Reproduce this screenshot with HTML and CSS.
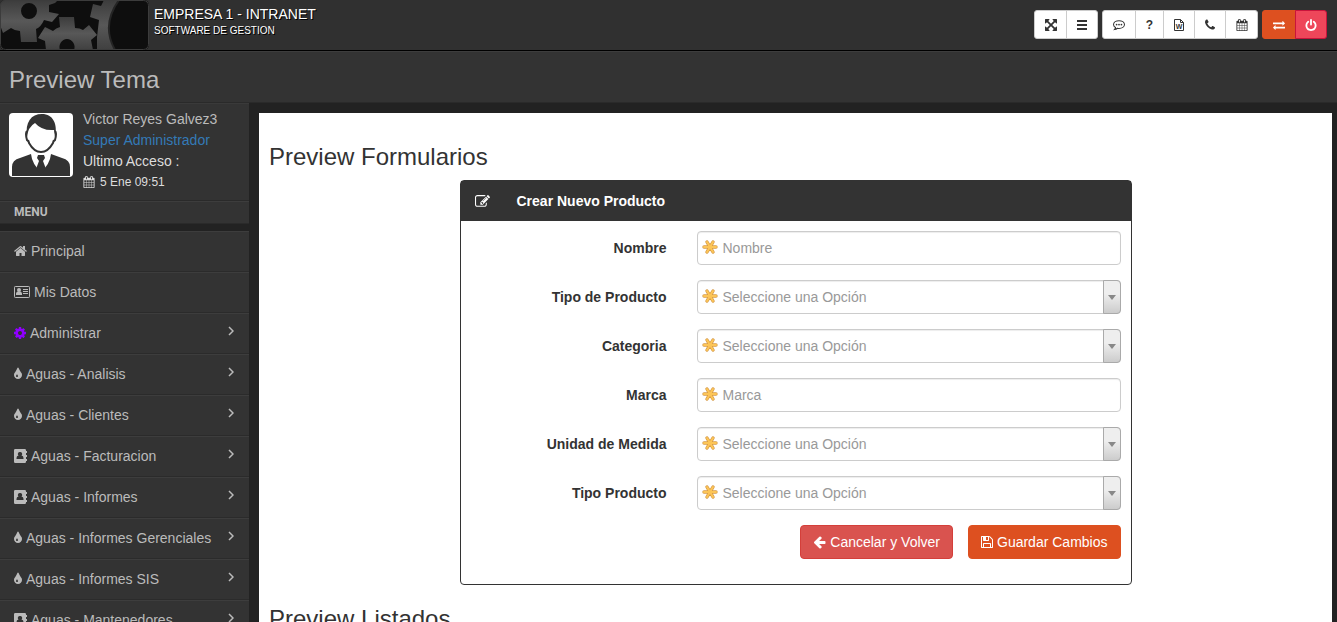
FILE: index.html
```html
<!DOCTYPE html>
<html lang="es">
<head>
<meta charset="utf-8">
<title>Empresa 1 - Intranet</title>
<link rel="stylesheet" href="styles.css">
</head>
<body>
<svg class="sprite" aria-hidden="true">
  <symbol id="expand" viewBox="128 128 1536 1536"><path d="M1411 541l-355 355 355 355 144-144q29-31 70-14 39 17 39 59v448q0 26-19 45t-45 19h-448q-42 0-59-40-17-39 14-69l144-144-355-355-355 355 144 144q31 30 14 69-17 40-59 40h-448q-26 0-45-19t-19-45v-448q0-42 40-59 39-17 69 14l144 144 355-355-355-355-144 144q-19 19-45 19-12 0-24-5-40-17-40-59v-448q0-26 19-45t45-19h448q42 0 59 40 17 39-14 69l-144 144 355 355 355-355-144-144q-31-30-14-69 17-40 59-40h448q26 0 45 19t19 45v448q0 42-39 59-13 5-25 5-26 0-45-19z"/></symbol>
  <symbol id="bars" viewBox="0 0 12 12"><path d="M1 1h10v2H1zM1 5h10v2H1zM1 9h10v2H1z"/></symbol>
  <symbol id="comment" viewBox="0 0 14 14"><path d="M7 2C3.700 2 .6 3.800.6 6.500c0 1.500.9 2.700 2.300 3.500-.1.900-.6 1.700-1.200 2.300 1.600-.2 2.700-.8 3.500-1.500.6.100 1.200.2 1.800.2 3.300 0 6.400-1.800 6.400-4.500S10.300 2 7 2z" fill="none" stroke="currentColor" stroke-width="1.200"/><circle cx="4.200" cy="6.500" r="1"/><circle cx="7" cy="6.500" r="1"/><circle cx="9.800" cy="6.500" r="1"/></symbol>
  <symbol id="phone" viewBox="192 192 1408 1408"><path d="M1600 1240q0 27-10 70.500t-21 68.500q-21 50-122 106-94 51-186 51-27 0-53-3.500t-57.500-12.500-47-14.500-55.500-20.500-49-18q-98-35-175-83-127-79-264-216t-216-264q-48-77-83-175-3-9-18-49t-20.500-55.500-14.500-47-12.500-57.500-3.500-53q0-92 51-186 56-101 106-122 25-11 68.500-21t70.500-10q14 0 21 3 18 6 53 76 11 19 30 54t35 63.500 31 53.500q3 4 17.500 25t21.500 35.500 7 28.500q0 20-28.500 50t-62 55-62 53-28.500 46q0 9 5 22.500t8.500 20.500 14 24 11.500 19q76 137 174 235t235 174q2 1 19 11.500t24 14 20.500 8.500 22.500 5q18 0 46-28.500t53-62 55-62 50-28.500q14 0 28.500 7t35.500 21.500 25 17.500q25 15 53.500 31t63.500 35 54 30q70 35 76 53 3 7 3 21z"/></symbol>
  <symbol id="calendar" viewBox="64 0 1664 1792"><path d="M192 1664h288v-288h-288v288zm352 0h320v-288h-320v288zm-352-352h288v-320h-288v320zm352 0h320v-320h-320v320zm-352-384h288v-288h-288v288zm736 736h320v-288h-320v288zm-384-736h320v-288h-320v288zm768 736h288v-288h-288v288zm-384-352h320v-320h-320v320zm-352-864v-288q0-13-9.500-22.500t-22.500-9.500h-64q-13 0-22.500 9.500t-9.500 22.500v288q0 13 9.500 22.500t22.500 9.500h64q13 0 22.500-9.500t9.500-22.500zm736 864h288v-320h-288v320zm-384-384h320v-288h-320v288zm384 0h288v-288h-288v288zm32-480v-288q0-13-9.500-22.500t-22.500-9.500h-64q-13 0-22.500 9.500t-9.500 22.500v288q0 13 9.500 22.500t22.500 9.500h64q13 0 22.500-9.500t9.500-22.500zm384-64v1280q0 52-38 90t-90 38h-1408q-52 0-90-38t-38-90v-1280q0-52 38-90t90-38h128v-96q0-66 47-113t113-47h64q66 0 113 47t47 113v96h384v-96q0-66 47-113t113-47h64q66 0 113 47t47 113v96h128q52 0 90 38t38 90z"/></symbol>
  <symbol id="exchange" viewBox="0 0 1792 1792"><path d="M1792 1184v192q0 13-9.500 22.500t-22.500 9.500h-1376v192q0 13-9.500 22.500t-22.500 9.500q-12 0-24-10l-319-320q-9-9-9-22 0-14 9-23l320-320q9-9 23-9 13 0 22.500 9.500t9.500 22.500v192h1376q13 0 22.500 9.500t9.500 22.500zm0-544q0 14-9 23l-320 320q-9 9-23 9-13 0-22.500-9.500t-9.500-22.500v-192h-1376q-13 0-22.500-9.500t-9.500-22.500v-192q0-13 9.500-22.500t22.500-9.500h1376v-192q0-14 9-23t23-9q12 0 24 10l319 319q9 9 9 23z"/></symbol>
  <symbol id="power" viewBox="128 0 1536 1664"><path d="M1664 896q0 156-61 298t-164 245-245 164-298 61-298-61-245-164-164-245-61-298q0-182 80.500-343t226.500-270q43-32 95.500-25t83.500 50q32 42 24.500 94.500t-49.500 84.500q-98 74-151.500 181t-53.500 228q0 104 40.500 198.500t109.500 163.500 163.500 109.500 198.500 40.500 198.500-40.500 163.500-109.500 109.500-163.500 40.500-198.500q0-121-53.500-228t-151.500-181q-42-32-49.500-84.500t24.500-94.500q31-43 84-50t95 25q146 109 226.500 270t80.500 343zm-640-768v640q0 52-38 90t-90 38-90-38-38-90v-640q0-52 38-90t90-38 90 38 38 90z"/></symbol>
  <symbol id="home" viewBox="64 0 1664 1792"><path d="M1472 992v480q0 26-19 45t-45 19h-384v-384h-256v384h-384q-26 0-45-19t-19-45v-480q0-1 .5-3t.5-3l575-474 575 474q1 2 1 6zm223-69l-62 74q-8 9-21 11h-3q-13 0-21-7l-692-577-692 577q-12 8-24 7-13-2-21-11l-62-74q-8-10-7-23.500t11-21.500l719-599q32-26 76-26t76 26l244 204v-195q0-14 9-23t23-9h192q14 0 23 9t9 23v408l219 182q10 8 11 21.500t-7 23.500z"/></symbol>
  <symbol id="card" viewBox="0 0 16 14"><path d="M1.300 1.500h13.400a.8.8 0 0 1 .8.8v9.400a.8.8 0 0 1-.8.8H1.300a.8.8 0 0 1-.8-.8V2.300a.8.8 0 0 1 .8-.8z" fill="none" stroke="currentColor"/><circle cx="5" cy="5" r="2"/><path d="M2 10V8.600Q2.200 7 3.700 6.600h2.600Q7.800 7 8 8.600V10zM9 4h5v1H9zM9 6h5v1H9zM9 8h5v1H9zM3 12h2v1H3zM11 12h2v1h-2z"/></symbol>
  <symbol id="cog" viewBox="128 0 1536 1792"><path d="M1152 896q0-106-75-181t-181-75-181 75-75 181 75 181 181 75 181-75 75-181zm512-109v222q0 12-8 23t-20 13l-185 28q-19 54-39 91 35 50 107 138 10 12 10 25t-9 23q-27 37-99 108t-94 71q-12 0-26-9l-138-108q-44 23-91 38-16 136-29 186-7 28-36 28h-222q-14 0-24.500-8.500t-11.500-21.500l-28-184q-49-16-90-37l-141 107q-10 9-25 9-14 0-25-11-126-114-165-168-7-10-7-23 0-12 8-23 15-21 51-66.500t54-70.500q-27-50-41-99l-183-27q-13-2-21-12.500t-8-23.500v-222q0-12 8-23t19-13l186-28q14-46 39-92-40-57-107-138-10-12-10-24 0-10 9-23 26-36 98.500-107.500t94.500-71.500q13 0 26 10l138 107q44-23 91-38 16-136 29-186 7-28 36-28h222q14 0 24.500 8.500t11.500 21.500l28 184q49 16 90 37l142-107q9-9 24-9 13 0 25 10 129 119 165 170 7 8 7 22 0 12-8 23-15 21-51 66.500t-54 70.500q26 50 41 98l183 28q13 2 21 12.500t8 23.500z"/></symbol>
  <symbol id="tint" viewBox="384 0 1024 1792"><path d="M896 1152q0-36-20-69-1-1-15.500-22.500t-25.500-38-25-44-21-50.500q-4-16-21-16t-21 16q-7 23-21 50.500t-25 44-25.500 38-15.500 22.500q-20 33-20 69 0 53 37.500 90.500t90.500 37.500 90.500-37.500 37.500-90.500zm512-128q0 212-150 362t-362 150-362-150-150-362q0-145 81-275 6-9 62.500-90.500t101-151 99.500-178 83-201.500q9-30 34-47t51-17 51.500 17 33.500 47q28 93 83 201.500t99.500 178 101 151 62.500 90.500q81 127 81 275z"/></symbol>
  <symbol id="book" viewBox="0 0 13 14"><path fill-rule="evenodd" d="M1.200 0h9.600q1.200 0 1.200 1.200V2h1v2h-1v2h1v2h-1v2h1v2h-1v.8q0 1.200-1.200 1.200H1.200Q0 14 0 12.800V1.200Q0 0 1.200 0zM6 3a2 2 0 0 0-1.500 3.500Q2.500 6.800 2.500 9v1h7V9q0-2.200-2-2.500A2 2 0 0 0 6 3z"/></symbol>
  <symbol id="angle" viewBox="0 0 6 10"><path d="M1 1l4 4-4 4" fill="none" stroke="currentColor" stroke-width="1.500"/></symbol>
  <symbol id="edit" viewBox="0 0 1792 1792"><path d="M888 1184l116-116-152-152-116 116v56h96v96h56zm440-720q-16-16-33 1l-350 350q-17 17-1 33t33-1l350-350q17-17 1-33zm80 594v190q0 119-84.500 203.500t-203.500 84.500h-832q-119 0-203.500-84.500t-84.500-203.500v-832q0-119 84.500-203.500t203.500-84.500h832q63 0 117 25 15 7 18 23 3 17-9 29l-49 49q-14 14-32 8-23-6-45-6h-832q-66 0-113 47t-47 113v832q0 66 47 113t113 47h832q66 0 113-47t47-113v-126q0-13 9-22l64-64q15-15 35-7t20 29zm-96-738l288 288-672 672h-288v-288zm444 132l-92 92-288-288 92-92q28-28 68-28t68 28l152 152q28 28 28 68t-28 68z"/></symbol>
  <symbol id="back" viewBox="64 0 1664 1792"><path d="M1664 896v128q0 53-32.500 90.500t-84.500 37.500h-704l293 294q38 36 38 90t-38 90l-75 76q-37 37-90 37-52 0-91-37l-651-652q-37-37-37-90 0-52 37-91l651-650q38-38 91-38 52 0 90 38l75 74q38 38 38 91t-38 91l-293 293h704q52 0 84.500 37.500t32.500 90.500z"/></symbol>
  <symbol id="save" viewBox="128 0 1536 1792"><path d="M512 1536h768v-384h-768v384zm896 0h128v-896q0-14-10-38.500t-20-34.500l-281-281q-10-10-34-20t-39-10v416q0 40-28 68t-68 28h-576q-40 0-68-28t-28-68v-416h-128v1280h128v-416q0-40 28-68t68-28h832q40 0 68 28t28 68v416zm-384-928v-320q0-13-9.500-22.500t-22.500-9.500h-192q-13 0-22.500 9.500t-9.500 22.500v320q0 13 9.500 22.500t22.500 9.500h192q13 0 22.500-9.500t9.500-22.500zm640 32v928q0 40-28 68t-68 28h-1344q-40 0-68-28t-28-68v-1344q0-40 28-68t68-28h928q40 0 88 20t76 48l280 280q28 28 48 76t20 88z"/></symbol>
  <symbol id="required" viewBox="0 0 16 16"><g fill="none" stroke-linecap="round"><path d="M2 8h12M5 3l6 10M11 3L5 13" stroke="#d69a48" stroke-width="3.400"/><path d="M2 8h12M5 3l6 10M11 3L5 13" stroke="#fcc557" stroke-width="2"/></g></symbol>
</svg>

<header class="topbar">
  <svg class="logo" viewBox="0 0 149 50" aria-hidden="true">
    <defs>
      <linearGradient id="metal" x1="0" y1="0" x2="0" y2="1"><stop offset="0" stop-color="#3c3c3c"/><stop offset=".5" stop-color="#585858"/><stop offset="1" stop-color="#404040"/></linearGradient>
      <clipPath id="frame"><rect width="149" height="50" rx="5"/></clipPath>
    </defs>
    <g clip-path="url(#frame)">
      <rect width="149" height="50" fill="#0e0e0e"/>
      <path fill="url(#metal)" fill-rule="evenodd" d="M0 0h58l-3 3-6 2v7l10 2-7 8-8-2q-3 7-8 9l1 13H21l-1-11q-5 0-9-3l-8 5-3-8zM29 3a8 8 0 1 0 0 16 8 8 0 0 0 0-16z"/>
      <path fill="url(#metal)" fill-rule="evenodd" d="M59 17h15l1 11q5 0 8 2l6-5 8 10-6 5 2 10H46l-1-9-7-3 7-11 8 4q3-3 7-4zM67 39a8 8 0 0 0-7 11h14a8 8 0 0 0-7-11z"/>
      <path fill="url(#metal)" d="M104 0h15q-18 25-4 50H97V37l2-17-9-3 3-13 8 2z"/>
      <path fill="none" stroke="#252525" stroke-width="2" d="M119 0q-18 25-4 50"/>
      <rect x=".5" y=".5" width="148" height="49" rx="5" fill="none" stroke="#3c3c3c"/>
    </g>
  </svg>
  <div class="brand">
    <div class="brand-name">EMPRESA 1 - INTRANET</div>
    <div class="brand-sub">SOFTWARE DE GESTION</div>
  </div>
  <nav class="tools" aria-label="Herramientas">
    <div class="tool-group">
      <button class="tool" aria-label="Pantalla completa"><svg class="i11"><use href="#expand"/></svg></button>
      <button class="tool" aria-label="Menu"><svg class="i10 wide"><use href="#bars"/></svg></button>
    </div>
    <div class="tool-group">
      <button class="tool" aria-label="Mensajes"><svg class="i12"><use href="#comment"/></svg></button>
      <button class="tool help" aria-label="Ayuda">?</button>
      <button class="tool" aria-label="Documento"><svg class="i10 wide" viewBox="0 0 12 12"><path d="M1.500 .5h6l3 3v8h-9zM7.500 .5v3h3" fill="none" stroke="currentColor"/><text x="6" y="10" text-anchor="middle" class="word-letter">W</text></svg></button>
      <button class="tool" aria-label="Telefono"><svg class="i10"><use href="#phone"/></svg></button>
      <button class="tool" aria-label="Calendario"><svg class="i11"><use href="#calendar"/></svg></button>
    </div>
    <div class="tool-group">
      <button class="tool orange" aria-label="Cambiar"><svg class="i12"><use href="#exchange"/></svg></button>
      <button class="tool red" aria-label="Salir"><svg class="i10 wide"><use href="#power"/></svg></button>
    </div>
  </nav>
</header>
<div class="titlebar"><h1>Preview Tema</h1></div>

<div class="layout">
  <aside class="sidebar">
    <div class="user">
      <svg class="avatar" viewBox="0 0 64 64" role="img" aria-label="Usuario">
        <rect width="64" height="64" rx="4" fill="#fff"/>
        <path fill="#333" d="M18 24C16 9 22 1 33 1s16 10 13 23l-1-7q-12 1-19-7-7 4-8 14z"/>
        <path fill="none" stroke="#333" stroke-width="2" d="M18 18q-2 2 0 9 2 1 2 3 5 9 12 9t12-9q0-2 2-3 2-7 0-9"/>
        <path fill="#333" d="M3 63V54q0-7 8-9l11-4q1 10 10 18 9-8 10-18l11 4q8 2 8 9v9z"/>
        <path fill="#333" d="M29 42h6l1 3-2 3 3 8-5 5-5-5 3-8-2-3z"/>
      </svg>
      <div class="user-info">
        <span class="muted">Victor Reyes Galvez3</span>
        <a class="role" href="#">Super Administrador</a>
        <span>Ultimo Acceso :</span>
        <span class="date"><svg class="i11"><use href="#calendar"/></svg>5 Ene 09:51</span>
      </div>
    </div>
    <div class="menu-title">MENU</div>
    <nav class="menu" aria-label="Principal">
      <a href="#"><svg class="m13"><use href="#home"/></svg>Principal</a>
      <a href="#"><svg class="m16"><use href="#card"/></svg>Mis Datos</a>
      <a href="#"><svg class="m12 purple"><use href="#cog"/></svg>Administrar<svg class="angle"><use href="#angle"/></svg></a>
      <a href="#"><svg class="m8"><use href="#tint"/></svg>Aguas - Analisis<svg class="angle"><use href="#angle"/></svg></a>
      <a href="#"><svg class="m8"><use href="#tint"/></svg>Aguas - Clientes<svg class="angle"><use href="#angle"/></svg></a>
      <a href="#"><svg class="m13"><use href="#book"/></svg>Aguas - Facturacion<svg class="angle"><use href="#angle"/></svg></a>
      <a href="#"><svg class="m13"><use href="#book"/></svg>Aguas - Informes<svg class="angle"><use href="#angle"/></svg></a>
      <a href="#"><svg class="m8"><use href="#tint"/></svg>Aguas - Informes Gerenciales<svg class="angle"><use href="#angle"/></svg></a>
      <a href="#"><svg class="m8"><use href="#tint"/></svg>Aguas - Informes SIS<svg class="angle"><use href="#angle"/></svg></a>
      <a href="#"><svg class="m13"><use href="#book"/></svg>Aguas - Mantenedores<svg class="angle"><use href="#angle"/></svg></a>
    </nav>
  </aside>

  <main class="content">
    <h2>Preview Formularios</h2>
    <form class="panel">
      <div class="panel-head"><svg class="edit"><use href="#edit"/></svg><h3>Crear Nuevo Producto</h3></div>
      <div class="panel-body">
        <div class="field"><label for="nombre">Nombre</label><div class="control"><svg class="req"><use href="#required"/></svg><input id="nombre" type="text" placeholder="Nombre"></div></div>
        <div class="field"><label for="tipo">Tipo de Producto</label><div class="control pick"><svg class="req"><use href="#required"/></svg><select id="tipo"><option>Seleccione una Opción</option></select></div></div>
        <div class="field"><label for="categoria">Categoria</label><div class="control pick"><svg class="req"><use href="#required"/></svg><select id="categoria"><option>Seleccione una Opción</option></select></div></div>
        <div class="field"><label for="marca">Marca</label><div class="control"><svg class="req"><use href="#required"/></svg><input id="marca" type="text" placeholder="Marca"></div></div>
        <div class="field"><label for="unidad">Unidad de Medida</label><div class="control pick"><svg class="req"><use href="#required"/></svg><select id="unidad"><option>Seleccione una Opción</option></select></div></div>
        <div class="field"><label for="tipo2">Tipo Producto</label><div class="control pick"><svg class="req"><use href="#required"/></svg><select id="tipo2"><option>Seleccione una Opción</option></select></div></div>
        <div class="actions">
          <button type="button" class="btn danger"><svg class="m13"><use href="#back"/></svg>Cancelar y Volver</button>
          <button type="button" class="btn primary"><svg class="m12"><use href="#save"/></svg>Guardar Cambios</button>
        </div>
      </div>
    </form>
    <h2>Preview Listados</h2>
  </main>
</div>
</body>
</html>
```

FILE: styles.css
```css
*, *::before, *::after { box-sizing: border-box; }
html { height: 100%; overflow: hidden; }
body {
  height: 100%;
  margin: 0;
  overflow-y: auto;
  scrollbar-width: none;
  background: #222;
  color: #333;
  font: 14px/20px "Liberation Sans", Arial, sans-serif;
}
svg { flex: none; fill: currentColor; }
button, input, select { font: inherit; }
h1, h2, h3 { margin: 0; font-weight: 400; }
.sprite { position: absolute; width: 0; height: 0; }
.word-letter { font: bold 7px "Liberation Sans", Arial, sans-serif; }

.i12 { width: 12px; height: 12px; }
.i11 { width: 12px; height: 12px; margin-right: -1px; }
.i10 { width: 10px; height: 12px; }
.i10.wide { width: 12px; margin: 0 -1px; }
.m16 { width: 16px; height: 14px; }
.m13 { width: 13px; height: 14px; }
.m12 { width: 12px; height: 14px; }
.m8 { width: 8px; height: 14px; }
.purple { color: #8f00ff; }

.topbar {
  display: flex;
  align-items: flex-start;
  height: 51px;
  background: #303030;
  border-bottom: 1px solid #000;
}
.logo { width: 149px; height: 50px; }
.brand {
  padding: 4px 5px;
  color: #fff;
  text-shadow: 1px 1px 0 #000;
}
.brand-name { font-size: 14px; line-height: 20px; }
.brand-sub { font-size: 10px; line-height: 14px; }
.tools {
  display: flex;
  gap: 4px;
  margin-left: auto;
  padding: 10px 10px 0 0;
}
.tool-group { display: flex; }
.tool {
  display: flex;
  align-items: center;
  height: 29px;
  margin: 0 0 0 -1px;
  padding: 0 10px;
  background: #fff;
  border: 1px solid #ccc;
  color: #333;
}
.tool:first-child { margin-left: 0; border-radius: 3px 0 0 3px; }
.tool:last-child { border-radius: 0 3px 3px 0; }
.tool.help { font-size: 12px; font-weight: 700; }
.tool.orange { background: #dd5020; border-color: #dd5020; color: #fff; }
.tool.red { background: #ee465a; border-color: #c9143c; color: #fff; }

.titlebar {
  padding: 16px 9px 10px;
  background: #333;
  border-top: 1px solid #3d3d3d;
  border-bottom: 1px solid #2a2a2a;
}
.titlebar h1 { color: #bbb; font-size: 24px; line-height: 24px; }

.layout { display: flex; align-items: stretch; }
.sidebar { flex: 0 0 249px; }
.user {
  display: flex;
  gap: 10px;
  padding: 9px 9px 8px;
  background: #333;
  border-top: 1px solid #3a3a3a;
  border-bottom: 1px solid #2a2a2a;
}
.avatar { width: 64px; height: 64px; }
.user-info {
  display: flex;
  flex-direction: column;
  margin-top: -4px;
  color: #ddd;
  line-height: 21px;
}
.muted { color: #bbb; }
.role { color: #337ab7; text-decoration: none; }
.date { display: flex; align-items: center; gap: 6px; font-size: 12px; line-height: 20px; }
.menu-title {
  padding-left: 14px;
  margin-bottom: 7px;
  background: #333;
  border-top: 1px solid #3d3d3d;
  border-bottom: 1px solid #2a2a2a;
  color: #bbb;
  font: bold 12px/21px Roboto, "Liberation Sans", sans-serif;
}
.menu a {
  display: flex;
  align-items: center;
  gap: 4px;
  height: 41px;
  padding: 0 15px 2px 14px;
  background: #333;
  border-top: 1px solid #3d3d3d;
  border-bottom: 1px solid #2b2b2b;
  color: #bbb;
  text-decoration: none;
}
.menu .angle { width: 6px; height: 10px; margin: 0 0 4px auto; }

.content {
  flex: 1;
  min-width: 0;
  margin: 10px 5px 0 10px;
  padding: 10px;
  background: #fff;
}
.content h2 { margin: 20px 0 10px; font-size: 24px; line-height: 27px; }
.panel {
  width: calc(66.667% - 30px);
  margin: 0 auto;
  border: 1px solid #333;
  border-radius: 4px;
}
.panel-head {
  display: flex;
  align-items: center;
  gap: 27px;
  padding: 10px 14px;
  background: #333;
  color: #fff;
}
.panel-head h3 { font-size: 14px; font-weight: 700; }
.edit { width: 15px; height: 15px; }
.panel-body { padding: 10px 10px 25px; }
.field {
  display: grid;
  grid-template-columns: 196fr 424fr;
  gap: 30px;
  align-items: center;
  margin-bottom: 15px;
}
.field label { font-weight: 700; text-align: right; }
.control { position: relative; height: 34px; }
.control input, .control select {
  display: block;
  width: 100%;
  height: 34px;
  padding: 0 25px;
  appearance: none;
  background: #fff;
  border: 1px solid #ccc;
  border-radius: 4px;
  box-shadow: inset 0 1px 1px rgba(0, 0, 0, .075);
  color: #999;
}
.control input { color: #555; }
.control input::placeholder { color: #999; opacity: 1; }
.req { position: absolute; left: 5px; top: 8px; width: 16px; height: 16px; pointer-events: none; }
.pick::before {
  content: "";
  position: absolute;
  right: 0;
  top: 0;
  width: 18px;
  height: 34px;
  background: linear-gradient(#eee 40%, #ccc);
  border: 1px solid #aaa;
  border-radius: 0 4px 4px 0;
  pointer-events: none;
  z-index: 1;
}
.pick::after {
  content: "";
  position: absolute;
  right: 5px;
  top: 15px;
  border: 4px solid transparent;
  border-top: 5px solid #888;
  border-bottom: 0;
  pointer-events: none;
  z-index: 1;
}
.actions { display: flex; justify-content: flex-end; gap: 15px; }
.btn {
  display: flex;
  align-items: center;
  gap: 4px;
  height: 34px;
  padding: 0 12px;
  border: 1px solid #dd5020;
  border-radius: 4px;
  background: #dd5020;
  color: #fff;
}
.btn.danger { background: #d9534f; border-color: #d43f3a; }
```
